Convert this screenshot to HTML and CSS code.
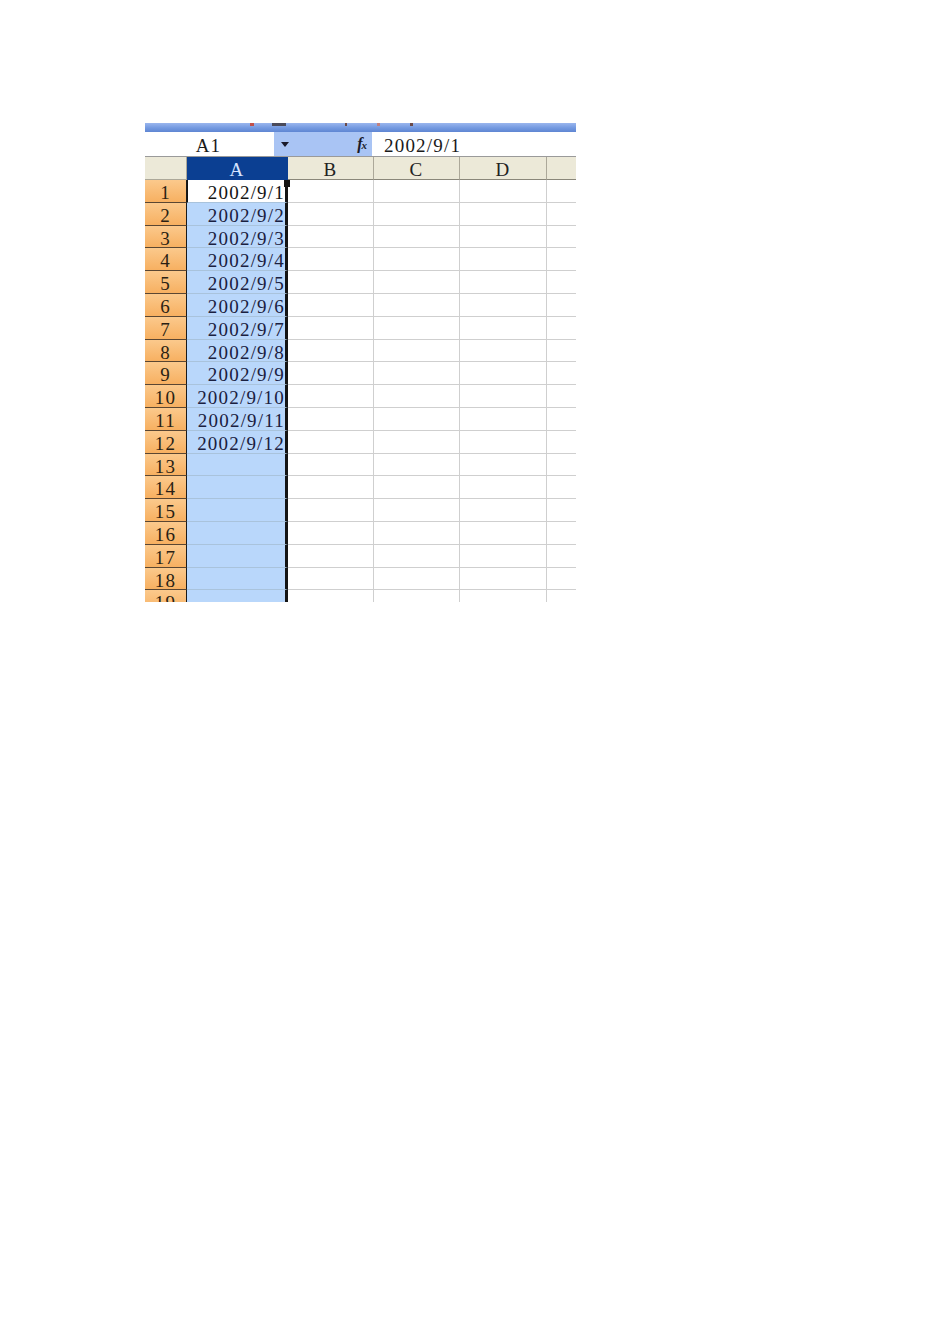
FILE: index.html
```html
<!DOCTYPE html>
<html>
<head>
<meta charset="utf-8">
<link rel="stylesheet" href="styles.css">
</head>
<body>
<div class="shot">
  <div class="toolstrip">
    <span class="mark m1"></span><span class="mark m2"></span><span class="mark m3"></span><span class="mark m4"></span><span class="mark m5"></span>
  </div>
  <div class="fbar">
    <div class="namebox">A1</div>
    <div class="drop"><span class="tri"></span></div>
    <div class="fxzone"><span class="fx">f<span class="fxx">x</span></span></div>
    <div class="finput">2002/9/1</div>
  </div>
  <div class="sheet">
    <div class="corner"></div>
    <div class="ch ch-sel">A</div>
    <div class="ch">B</div>
    <div class="ch">C</div>
    <div class="ch">D</div>
    <div class="ch ch-last"></div>

    <div class="rh">1</div><div class="ca active">2002/9/1<span class="handle"></span></div><div class="c"></div><div class="c"></div><div class="c"></div><div class="c"></div>
    <div class="rh">2</div><div class="ca">2002/9/2</div><div class="c"></div><div class="c"></div><div class="c"></div><div class="c"></div>
    <div class="rh">3</div><div class="ca">2002/9/3</div><div class="c"></div><div class="c"></div><div class="c"></div><div class="c"></div>
    <div class="rh">4</div><div class="ca">2002/9/4</div><div class="c"></div><div class="c"></div><div class="c"></div><div class="c"></div>
    <div class="rh">5</div><div class="ca">2002/9/5</div><div class="c"></div><div class="c"></div><div class="c"></div><div class="c"></div>
    <div class="rh">6</div><div class="ca">2002/9/6</div><div class="c"></div><div class="c"></div><div class="c"></div><div class="c"></div>
    <div class="rh">7</div><div class="ca">2002/9/7</div><div class="c"></div><div class="c"></div><div class="c"></div><div class="c"></div>
    <div class="rh">8</div><div class="ca">2002/9/8</div><div class="c"></div><div class="c"></div><div class="c"></div><div class="c"></div>
    <div class="rh">9</div><div class="ca">2002/9/9</div><div class="c"></div><div class="c"></div><div class="c"></div><div class="c"></div>
    <div class="rh">10</div><div class="ca">2002/9/10</div><div class="c"></div><div class="c"></div><div class="c"></div><div class="c"></div>
    <div class="rh">11</div><div class="ca">2002/9/11</div><div class="c"></div><div class="c"></div><div class="c"></div><div class="c"></div>
    <div class="rh">12</div><div class="ca">2002/9/12</div><div class="c"></div><div class="c"></div><div class="c"></div><div class="c"></div>
    <div class="rh">13</div><div class="ca"></div><div class="c"></div><div class="c"></div><div class="c"></div><div class="c"></div>
    <div class="rh">14</div><div class="ca"></div><div class="c"></div><div class="c"></div><div class="c"></div><div class="c"></div>
    <div class="rh">15</div><div class="ca"></div><div class="c"></div><div class="c"></div><div class="c"></div><div class="c"></div>
    <div class="rh">16</div><div class="ca"></div><div class="c"></div><div class="c"></div><div class="c"></div><div class="c"></div>
    <div class="rh">17</div><div class="ca"></div><div class="c"></div><div class="c"></div><div class="c"></div><div class="c"></div>
    <div class="rh">18</div><div class="ca"></div><div class="c"></div><div class="c"></div><div class="c"></div><div class="c"></div>
    <div class="rh">19</div><div class="ca"></div><div class="c"></div><div class="c"></div><div class="c"></div><div class="c"></div>
  </div>
</div>
</body>
</html>
```

FILE: styles.css
```css
html, body {
  margin: 0;
  padding: 0;
  background: #ffffff;
}

body {
  font-family: "Liberation Serif", "DejaVu Serif", serif;
  font-size: 19px;
  letter-spacing: 1.2px;
  color: #111;
}

.shot {
  margin-left: 145px;
  margin-top: 123px;
  width: 431px;
  height: 479px;
  overflow: hidden;
  display: flex;
  flex-direction: column;
}

.toolstrip {
  height: 9px;
  flex: none;
  background: linear-gradient(#9ab6ee, #7399e0 55%, #5f86d2);
  position: relative;
}

.mark {
  position: absolute;
  top: 0;
  height: 3px;
  background: #6b4a48;
}
.m1 { left: 105px; width: 4px; background: #c0504a; }
.m2 { left: 127px; width: 14px; background: #4a4a5a; }
.m3 { left: 200px; width: 2px; }
.m4 { left: 232px; width: 3px; background: #c08080; }
.m5 { left: 265px; width: 3px; }

.fbar {
  height: 24px;
  flex: none;
  display: flex;
  border-bottom: 1px solid #9a9a9a;
}

.namebox {
  width: 129px;
  background: #ffffff;
  text-align: center;
  padding-right: 2px;
  box-sizing: border-box;
  line-height: 27px;
  height: 24px;
  color: #1a1a1a;
}

.drop {
  width: 23px;
  background: #a9c4f4;
  display: flex;
  align-items: center;
  justify-content: center;
}

.tri {
  width: 0;
  height: 0;
  border-left: 4px solid transparent;
  border-right: 4px solid transparent;
  border-top: 5px solid #1a1a2a;
  margin-right: 1px;
}

.fxzone {
  width: 75px;
  background: #a9c4f4;
  display: flex;
  align-items: center;
  justify-content: flex-end;
  padding-right: 6px;
  box-sizing: border-box;
}

.fx {
  font-family: "Liberation Serif", "DejaVu Serif", serif;
  font-style: italic;
  font-weight: bold;
  font-size: 16px;
  color: #1a1a2a;
  letter-spacing: -1px;
}

.fxx {
  font-size: 11px;
}

.finput {
  flex: 1;
  background: #ffffff;
  padding-left: 12px;
  line-height: 27px;
  height: 24px;
  color: #1a1a1a;
}

.sheet {
  display: grid;
  grid-template-columns: 42px 101px 86px 86px 87px 40px;
  grid-template-rows: 23px repeat(19, 22.8px);
  flex: none;
}

.corner {
  background: #ece9d8;
  border-right: 1px solid #aca899;
  border-bottom: 1px solid #aca899;
}

.ch {
  background: #ece9d8;
  border-right: 1px solid #aca899;
  border-bottom: 1px solid #8a877a;
  text-align: center;
  line-height: 26px;
  color: #222;
  overflow: hidden;
}

.ch-sel {
  background: #0b3f92;
  color: #d6e4ff;
  border-right: 1px solid #0b3f92;
  border-bottom: 1px solid #0b3f92;
}

.ch-last {
  border-right: none;
}

.rh {
  background: linear-gradient(#fbc98c, #f7b061);
  border-right: 1px solid #1a1a1a;
  border-bottom: 1px solid #5a4632;
  text-align: center;
  line-height: 26px;
  color: #2a1f14;
  overflow: hidden;
}

.ca {
  background: #b9d7fb;
  border-bottom: 1px solid #a9c3dc;
  border-right: 3px solid #141414;
  text-align: right;
  padding-right: 0;
  line-height: 26px;
  color: #1a2040;
  position: relative;
  overflow: visible;
}

.ca.active {
  background: #ffffff;
  border-left: 1px solid #141414;
  color: #141414;
}

.handle {
  position: absolute;
  right: -5px;
  top: 0;
  width: 6px;
  height: 7px;
  background: #141414;
}

.c {
  background: #ffffff;
  border-right: 1px solid #cfcfcf;
  border-bottom: 1px solid #cfcfcf;
}
```
